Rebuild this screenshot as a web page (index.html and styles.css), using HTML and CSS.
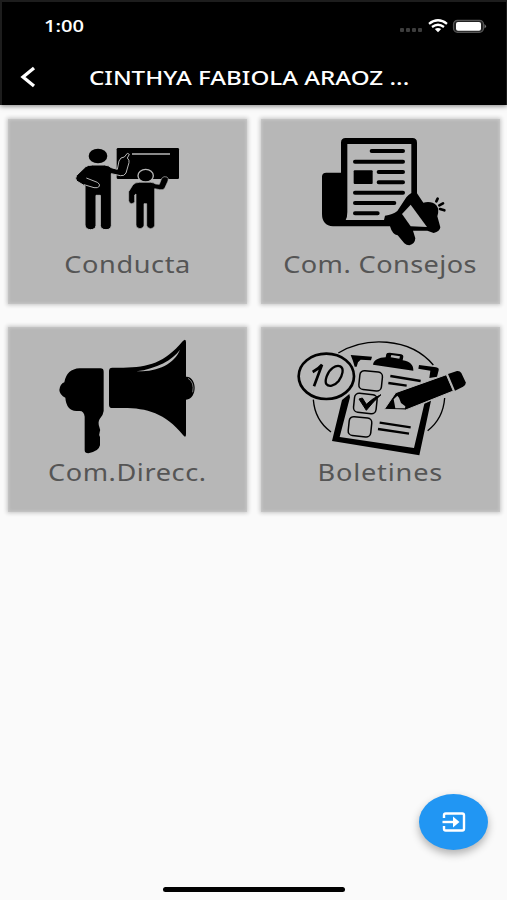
FILE: index.html
```html
<!DOCTYPE html>
<html lang="es">
<head>
    <meta charset="UTF-8">
    <meta name="viewport" content="width=device-width, initial-scale=1.0">
    <title>Alumno</title>
    <link rel="stylesheet" href="styles.css">
</head>
<body>

    <header class="appBar">
        <div class="statusBar">
            <span class="time">1:00</span>
            <svg class="statusIcons" viewBox="0 0 90 16" width="90" height="16">
                <g fill="#3d3d3d">
                    <rect x="3" y="10" width="4" height="4" rx="1"/>
                    <rect x="9" y="10" width="4" height="4" rx="1"/>
                    <rect x="15" y="10" width="4" height="4" rx="1"/>
                    <rect x="21" y="10" width="4" height="4" rx="1"/>
                </g>
                <g fill="none" stroke="#fff" stroke-width="2.3">
                    <path d="M32 5.800 Q41 -1.200 50 5.800"/>
                    <path d="M35 9 Q41 4.500 47 9"/>
                </g>
                <path d="M37.800 11 Q41 8.800 44.200 11 L41 14.200Z" fill="#fff"/>
                <rect x="56.500" y="2.300" width="30" height="12" rx="4" fill="#222" stroke="#555" stroke-width="1.200"/>
                <rect x="59" y="4" width="25" height="8.800" rx="2" fill="#fff"/>
                <path d="M87.500 6 Q90.500 8.300 87.500 10.600Z" fill="#777"/>
            </svg>
        </div>
        <div class="toolBar">
            <svg class="back" viewBox="0 0 18 22" width="18" height="22">
                <path d="M15 2 L4 11 L15 20" fill="none" stroke="#fff" stroke-width="3.300"/>
            </svg>
            <h1 class="title"><span>CINTHYA FABIOLA ARAOZ ...</span></h1>
        </div>
    </header>

    <main class="menu">
        <a class="card">
            <svg class="cardIcon" viewBox="-156 -48 717 390">
                <rect x="170" y="39" width="187" height="93" rx="4"/>
                <path d="M216 57H330" stroke="#b7b7b7" stroke-width="4"/>
                <ellipse cx="114" cy="63" rx="28" ry="22"/>
                <!-- maestro -->
                <path d="M77 95 Q84 90 98 90H134Q146 91 154 98L172 103L177 78Q181 66 193 66L202 55L208 58L202 69Q209 75 207 83L198 114Q193 124 181 122L154 116V271Q153 284 138 284Q122 284 121 271V181H108V271Q107 284 91 284Q76 283 75 270V153L50 138Q44 130 50 121Z" stroke="#b7b7b7" stroke-width="3"/>
                <path d="M79 129 L112 142Q121 147 118 154Q114 160 102 158L72 149" fill="none" stroke="#b7b7b7" stroke-width="3"/>
                <!-- alumno -->
                <ellipse cx="257" cy="122" rx="23" ry="19" stroke="#b7b7b7" stroke-width="4"/>
                <path d="M219 149Q226 142 239 142H272Q281 143 287 147L298 148L305 130Q311 122 321 126Q327 130 324 138L314 160Q309 166 299 164L284 161V271Q283 280 272 281Q261 280 260 271V206H252V271Q251 280 240 281Q228 280 228 270V177L224 180V200Q222 206 214 206Q207 205 206 197V170Z" stroke="#b7b7b7" stroke-width="2"/>
            </svg>
            <span class="label conducta">Conducta</span>
        </a>

        <a class="card">
            <svg class="cardIcon" viewBox="-147 -33 717 390">
                <path d="M93 128V38Q93 24 107 24H307Q321 24 321 38V190L340 218Q365 212 379 226Q389 239 382 259L391 292Q390 304 371 309L352 302L309 302L316 325Q315 342 298 346Q289 346 283 340L263 316Q247 314 240 289H69Q36 286 36 252V140Q36 128 49 128Z"/>
                <path d="M112 42H304V189Q295 194 289 202L262 243Q248 254 225 257L222 270H107Q112 262 112 246Z" fill="#b7b7b7"/>
                <path d="M302 224L351 291L302 289L276 252Z" fill="#b7b7b7"/>
                <g stroke="#000" stroke-width="12" stroke-linecap="round">
                    <path d="M185 63H279M135 95H279M206 126H279M206 157H279M135 188H279M135 219H253M135 250H203"/>
                </g>
                <rect x="131" y="121" width="57" height="41" rx="3"/>
                <path d="M379 214L383 206M388 226L399 220M390 237L403 241" stroke="#000" stroke-width="8" stroke-linecap="round"/>
            </svg>
            <span class="label consejos">Com. Consejos</span>
        </a>

        <a class="card">
            <svg class="cardIcon" viewBox="-96 -9 717 390">
                <path d="M119 115H181Q191 115 191 125V243Q190 255 179 267Q173 277 178 291Q182 299 179 307Q176 314 180 321V346Q176 365 145 370Q134 370 134 361V260Q132 243 119 243H109Q79 241 76 203Q59 195 58 180Q60 162 73 157Q80 117 119 115Z"/>
                <path d="M217 113H250C325 113 375 98 428 34Q438 23 438 37V140C456 139 464 158 464 173C464 190 456 207 438 209V313Q438 326 429 315C375 249 321 234 250 234H217Q207 234 207 224V123Q207 113 217 113Z"/>
                <path d="M289 124C350 126 403 103 420 59C398 90 350 116 289 124Z" fill="#b7b7b7"/>
                <path d="M444 145Q464 157 458 187" fill="none" stroke="#b7b7b7" stroke-width="2"/>
            </svg>
            <span class="label direcc">Com.Direcc.</span>
        </a>

        <a class="card">
            <svg class="cardIcon" viewBox="-87 -9 717 390">
                <g fill="none" stroke="#000" stroke-width="4">
                    <path d="M145 69C226 20 358 20 430 105"/>
                    <path d="M70 209C73 250 90 282 123 306"/>
                    <path d="M464 204C461 244 444 278 413 302"/>
                </g>
                <!-- tabla -->
                <path d="M182 75L246 80L243 91L212 89L204 97L200 110H194Q189 91 182 75ZM387 105L438 112Q448 114 446 121L441 140L418 144L421 122L385 116Z"/>
                <path d="M156 210L178 192L180 202L149 321L372 354L403 221L423 212L388 376L126 333Z"/>
                <path d="M249 104C251 91 267 82 287 82L289 72Q290 68 299 68L334 73Q341 75 340 80L338 91C360 93 371 106 370 122ZM304 75L302 82L328 86L330 79Z" fill-rule="evenodd"/>
                <g fill="none" stroke="#000" stroke-width="4.500">
                    <rect x="208" y="124" width="68" height="57" rx="14" transform="rotate(6 242 152)"/>
                    <rect x="192" y="192" width="68" height="57" rx="14" transform="rotate(6 226 220)"/>
                    <rect x="176" y="262" width="68" height="57" rx="14" transform="rotate(6 210 290)"/>
                </g>
                <path d="M207 207L217 204L229 223Q249 203 273 194Q248 216 229 241Z" stroke="#000" stroke-width="3"/>
                <path d="M301 138L392 153M295 159L350 167M269 278L362 292M264 297L357 311" stroke="#000" stroke-width="7"/>
                <!-- nota -->
                <ellipse cx="109" cy="139" rx="83" ry="68" fill="#b7b7b7" stroke="#000" stroke-width="8"/>
                <path d="M68 126Q86 116 96 104L72 169" fill="none" stroke="#000" stroke-width="8"/>
                <path d="M110 139C118 116 137 104 151 109C163 115 158 137 146 153C133 169 116 171 109 162C105 156 107 148 110 139Z" fill="none" stroke="#000" stroke-width="7"/>
                <!-- lapiz -->
                <path d="M283 238L317 188L469 134L490 183L347 240Z" stroke="#b7b7b7" stroke-width="3"/>
                <path d="M311 208L322 197L327 203L333 219L346 229L345 235L316 235Z" fill="#b7b7b7"/>
                <path d="M474 132L501 123Q510 122 514 129L527 157Q528 165 519 170L495 182Z"/>
            </svg>
            <span class="label boletines">Boletines</span>
        </a>
    </main>

    <button class="exitButton">
        <svg viewBox="0 0 24 20" width="24" height="20" fill="none" stroke="#fff" stroke-width="2.400">
            <path d="M2 6V3.200Q2 1.500 3.700 1.500H20.300Q22 1.500 22 3.200V16.800Q22 18.500 20.300 18.500H3.700Q2 18.500 2 16.800V14"/>
            <path d="M0.500 10H14"/>
            <path d="M11 4.500L17.500 10L11 15.500Z" fill="#fff" stroke="none"/>
        </svg>
    </button>
    <div class="homeIndicator"></div>

</body>
</html>
```

FILE: styles.css
```css
body {
    font-family: "Noto Sans", "Open Sans", sans-serif;
    margin: 0;
    height: 900px;
    background-color: #fafafa;
    overflow: hidden;
}

.appBar {
    height: 105px;
    background-color: #000;
    color: #fff;
    box-shadow: 0 1px 5px rgba(0, 0, 0, 0.5);
    box-sizing: border-box;
    border: 2px solid #1d1d1d;
    border-bottom: none;
    border-right-width: 1px;
}

.statusBar {
    height: 47px;
    display: flex;
    align-items: center;
    justify-content: space-between;
    padding: 0 19px 0 42px;
}

.time {
    font-family: "Open Sans", sans-serif;
    font-size: 16.5px;
    font-weight: 600;
    transform: scaleX(1.22);
    transform-origin: left;
}

.toolBar {
    height: 56px;
    display: flex;
    align-items: center;
}

.back {
    margin-left: 17px;
}

.title {
    margin: 1px 0 0 52px;
    font-size: 19.5px;
    line-height: 28px;
    font-weight: 500;
    white-space: nowrap;
}

.title span {
    display: inline-block;
    transform: scaleX(1.238);
    transform-origin: left;
}

.menu {
    display: grid;
    grid-template-columns: 239px 239px;
    grid-auto-rows: 185px;
    gap: 23px 14px;
    padding: 14px 8px;
}

.card {
    display: flex;
    flex-direction: column;
    align-items: center;
    background-color: #b7b7b7;
    box-shadow: 0 0 4px 1px #c4c4c4, inset 0 0 3px 1px #c8c8c8;
}

.cardIcon {
    width: 239px;
    height: 130px;
}

.label {
    font-size: 23px;
    line-height: 30px;
    color: #555;
    letter-spacing: 0.5px;
    white-space: nowrap;
    transform: scaleX(1.18);
}

.consejos {
    letter-spacing: 0.35px;
}

.boletines {
    letter-spacing: 0.7px;
}

.exitButton {
    position: absolute;
    left: 419px;
    top: 794px;
    width: 69px;
    height: 56px;
    display: flex;
    align-items: center;
    justify-content: center;
    padding: 0;
    border: none;
    border-radius: 50%;
    background-color: #2196f3;
    box-shadow: 0 4px 8px rgba(0, 0, 0, 0.3);
}

.homeIndicator {
    position: absolute;
    left: 163px;
    top: 887px;
    width: 182px;
    height: 5px;
    border-radius: 3px;
    background-color: #000;
}
```
